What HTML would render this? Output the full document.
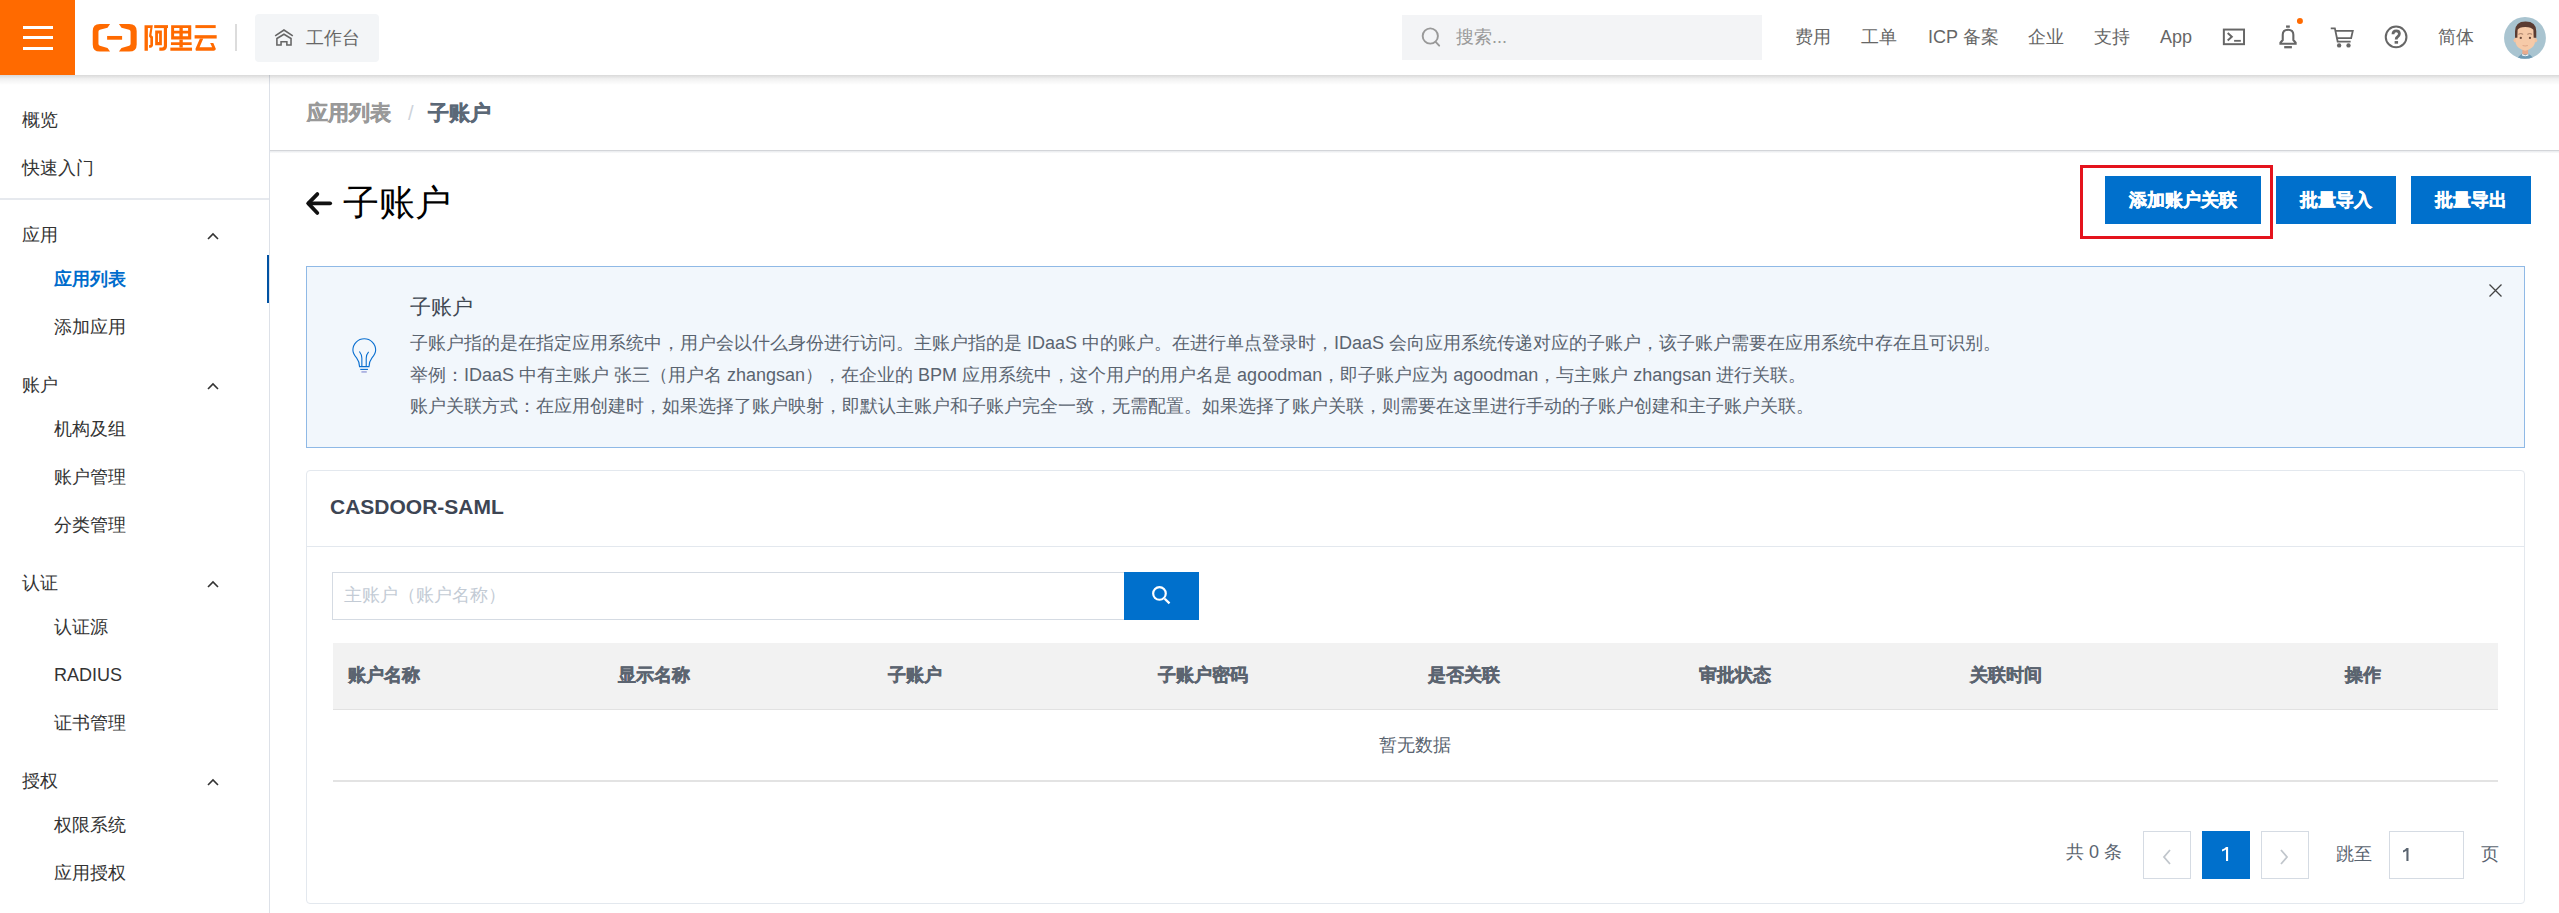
<!DOCTYPE html>
<html><head><meta charset="utf-8">
<style>
*{box-sizing:border-box;margin:0;padding:0}
html,body{width:2559px;height:913px;overflow:hidden;background:#fff;font-family:"Liberation Sans",sans-serif;color:#333}
.a{position:absolute;white-space:nowrap}
svg{position:absolute;display:block}
#hdr{position:absolute;left:0;top:0;width:2559px;height:75px;background:#fff;z-index:5}
#shd{position:absolute;left:0;top:75px;width:2559px;height:10px;background:linear-gradient(rgba(0,0,0,.15),rgba(0,0,0,.06) 38%,rgba(0,0,0,0));z-index:6}
.nav{font-size:18px;line-height:40px;top:17px;color:#666}
.sb{font-size:18px;line-height:40px;color:#333}
.btn{top:176px;height:48px;background:#0070cc;color:#fff;font-size:18px;font-weight:bold;line-height:48px;text-align:center}
.desc{font-size:18px;line-height:40px;color:#5a6470}
.th{top:655px;font-size:18px;line-height:40px;font-weight:bold;color:#5b6470}
.pg{font-size:18px;line-height:40px;color:#5a6470}
.bb{-webkit-text-stroke:0.45px currentColor}
</style></head><body>
<!-- HEADER -->
<div id="hdr">
  <div class="a" style="left:0;top:0;width:75px;height:75px;background:#ff6a00"></div>
  <div class="a" style="left:23px;top:26px;width:30px;height:3px;background:#fff"></div>
  <div class="a" style="left:23px;top:36px;width:30px;height:3px;background:#fff"></div>
  <div class="a" style="left:23px;top:47px;width:30px;height:3px;background:#fff"></div>
  <!-- logo bracket -->
  <svg style="left:88px;top:20px" width="52" height="36" viewBox="0 0 1319 913">
    <g fill="#ff6a00">
    <path d="M560 100 L300 100 Q120 100 120 280 L120 620 Q120 800 300 800 L560 800 L495 710 L300 655 Q265 640 265 600 L265 300 Q265 262 300 250 L495 195 Z"/>
    <path d="M785 100 L1045 100 Q1235 100 1235 280 L1235 620 Q1235 800 1045 800 L785 800 L850 710 L1045 655 Q1080 640 1080 600 L1080 300 Q1080 262 1045 250 L850 195 Z"/>
    <rect x="485" y="405" width="380" height="95"/>
    </g>
  </svg>
  <!-- logo text -->
  <svg style="left:140px;top:20px" width="82" height="36" viewBox="0 0 2080 913">
    <g fill="#ff6a00">
      <path d="M115 130 H325 L290 385 L330 425 L330 640 Q325 705 230 705 L230 635 L262 635 L262 460 L228 415 L262 205 H200 V780 H115 Z"/>
      <rect x="360" y="130" width="350" height="75"/>
      <path d="M605 205 H685 V660 Q685 780 560 780 H490 V695 H560 Q605 695 605 650 Z"/>
      <path d="M385 265 H555 V640 H385 Z M455 345 V560 H485 V345 Z" fill-rule="evenodd"/>
      <path d="M790 130 H1300 V495 H790 Z M865 205 V275 H1000 V205 Z M1085 205 V275 H1220 V205 Z M865 345 V415 H1000 V345 Z M1085 345 V415 H1220 V345 Z" fill-rule="evenodd"/>
      <rect x="1000" y="495" width="85" height="205"/>
      <rect x="785" y="565" width="525" height="70"/>
      <rect x="770" y="700" width="550" height="80"/>
      <rect x="1405" y="130" width="515" height="75"/>
      <rect x="1385" y="385" width="560" height="85"/>
      <path d="M1520 470 H1605 L1510 690 H1830 L1780 585 H1860 L1925 735 Q1910 780 1870 780 H1420 Q1405 770 1410 725 Z"/>
    </g>
  </svg>
  <div class="a" style="left:235px;top:24px;width:2px;height:27px;background:#dcdcdc"></div>
  <!-- workbench -->
  <div class="a" style="left:255px;top:14px;width:124px;height:48px;background:#f3f5f7;border-radius:4px"></div>
  <svg style="left:270px;top:24px" width="30" height="26" viewBox="0 0 1053 913">
    <g fill="none" stroke="#666" stroke-width="55" stroke-linejoin="miter">
      <path d="M180 420 L490 210 L800 420"/>
      <path d="M388 737 H242 V510 L490 360 L738 510 V737 H592 V625 H388 Z"/>
    </g>
  </svg>
  <div class="a nav" style="left:306px;top:18px;color:#666">工作台</div>
  <!-- search -->
  <div class="a" style="left:1402px;top:15px;width:360px;height:45px;background:#f3f4f6"></div>
  <svg style="left:1416px;top:22px" width="30" height="30" viewBox="0 0 913 913">
    <g fill="none" stroke="#999" stroke-width="58" stroke-linecap="round">
      <circle cx="435" cy="425" r="232"/>
      <path d="M605 615 L705 720"/>
    </g>
  </svg>
  <div class="a nav" style="left:1456px;color:#999">搜索...</div>
  <div class="a nav" style="left:1795px">费用</div>
  <div class="a nav" style="left:1861px">工单</div>
  <div class="a nav" style="left:1928px">ICP 备案</div>
  <div class="a nav" style="left:2028px">企业</div>
  <div class="a nav" style="left:2094px">支持</div>
  <div class="a nav" style="left:2160px">App</div>
  <svg style="left:2218px;top:22px" width="32" height="30" viewBox="0 0 974 913">
    <g fill="none" stroke="#666" stroke-width="60">
      <rect x="178" y="230" width="614" height="445"/>
      <path d="M295 335 L420 447 L295 560"/>
    </g>
    <rect x="490" y="545" width="205" height="55" fill="#666"/>
  </svg>
  <svg style="left:2274px;top:14px" width="32" height="38" viewBox="0 0 769 913">
    <circle cx="623" cy="168" r="72" fill="#ff6a00"/>
    <rect x="290" y="275" width="90" height="55" fill="#666"/>
    <path d="M155 715 L155 690 L210 625 L210 500 Q210 380 337 380 Q465 380 465 500 L465 625 L520 690 L520 715 Z" fill="none" stroke="#666" stroke-width="50"/>
    <rect x="245" y="770" width="185" height="55" fill="#666"/>
  </svg>
  <svg style="left:2326px;top:22px" width="32" height="30" viewBox="0 0 974 913">
    <g fill="none" stroke="#666" stroke-width="55">
      <path d="M145 195 H270 L355 595 H750"/>
      <path d="M295 272 H815 L765 490 H335"/>
    </g>
    <circle cx="400" cy="712" r="66" fill="#666"/>
    <circle cx="685" cy="712" r="66" fill="#666"/>
  </svg>
  <svg style="left:2380px;top:22px" width="32" height="30" viewBox="0 0 974 913">
    <circle cx="490" cy="455" r="315" fill="none" stroke="#666" stroke-width="62"/>
    <path d="M395 370 Q395 270 495 270 Q590 270 590 360 Q590 420 530 455 Q492 478 492 530" fill="none" stroke="#666" stroke-width="85"/>
    <rect x="445" y="580" width="105" height="80" fill="#666"/>
  </svg>
  <div class="a nav" style="left:2438px">简体</div>
  <svg style="left:2500px;top:14px" width="50" height="48" viewBox="0 0 951 913">
    <defs><clipPath id="avc"><circle cx="475" cy="455" r="398"/></clipPath></defs>
    <circle cx="475" cy="455" r="398" fill="#a9c4d0"/>
    <g clip-path="url(#avc)">
      <path d="M320 900 Q330 770 480 740 Q630 770 650 900 Z" fill="#6e9ab4"/>
      <rect x="425" y="640" width="110" height="130" fill="#e9aa8c"/>
      <path d="M420 760 L480 790 L540 760 L540 790 L480 805 L420 790 Z" fill="#fff"/>
      <circle cx="300" cy="500" r="42" fill="#f2c2a0"/>
      <circle cx="665" cy="500" r="42" fill="#f2c2a0"/>
      <path d="M300 330 Q300 220 480 220 Q660 220 660 330 L660 560 Q640 650 480 700 Q320 650 300 560 Z" fill="#f6caa8"/>
      <path d="M285 450 L285 330 Q290 145 485 145 Q690 145 690 330 L690 450 L640 450 L635 300 Q600 250 480 245 Q360 250 335 300 L330 450 Z" fill="#5b3c32"/>
      <circle cx="395" cy="455" r="22" fill="#6b4a3a"/>
      <circle cx="570" cy="455" r="22" fill="#6b4a3a"/>
      <path d="M350 385 Q395 360 440 385 M520 385 Q565 360 610 385" stroke="#a07860" stroke-width="18" fill="none"/>
      <path d="M430 600 Q480 615 530 600" stroke="#e0a888" stroke-width="20" fill="none"/>
    </g>
  </svg>
</div>

<div id="shd"></div>
<!-- SIDEBAR -->
<div class="a" style="left:0;top:75px;width:270px;height:838px;border-right:1px solid #dde1e8;background:#fff"></div>

<!-- SIDEBAR items -->
<div class="a sb" style="left:22px;top:100px">概览</div>
<div class="a sb" style="left:22px;top:148px">快速入门</div>
<div class="a" style="left:0;top:198px;width:269px;height:2px;background:#e6e9ee"></div>
<div class="a sb" style="left:22px;top:215.0px">应用</div>
<svg style="left:207px;top:232.0px" width="12" height="8" viewBox="0 0 12 8"><path d="M1 7 L6 2 L11 7" fill="none" stroke="#333" stroke-width="1.6"/></svg>
<div class="a sb" style="left:54px;top:259.0px;color:#006ccc;font-weight:bold">应用列表</div>
<div class="a" style="left:267px;top:255px;width:2px;height:48px;background:#0052a3"></div>
<div class="a sb" style="left:54px;top:307.0px">添加应用</div>
<div class="a sb" style="left:22px;top:364.7px">账户</div>
<svg style="left:207px;top:381.7px" width="12" height="8" viewBox="0 0 12 8"><path d="M1 7 L6 2 L11 7" fill="none" stroke="#333" stroke-width="1.6"/></svg>
<div class="a sb" style="left:54px;top:408.7px">机构及组</div>
<div class="a sb" style="left:54px;top:456.7px">账户管理</div>
<div class="a sb" style="left:54px;top:504.7px">分类管理</div>
<div class="a sb" style="left:22px;top:562.8px">认证</div>
<svg style="left:207px;top:579.8px" width="12" height="8" viewBox="0 0 12 8"><path d="M1 7 L6 2 L11 7" fill="none" stroke="#333" stroke-width="1.6"/></svg>
<div class="a sb" style="left:54px;top:606.8px">认证源</div>
<div class="a sb" style="left:54px;top:654.8px">RADIUS</div>
<div class="a sb" style="left:54px;top:702.8px">证书管理</div>
<div class="a sb" style="left:22px;top:760.8px">授权</div>
<svg style="left:207px;top:777.8px" width="12" height="8" viewBox="0 0 12 8"><path d="M1 7 L6 2 L11 7" fill="none" stroke="#333" stroke-width="1.6"/></svg>
<div class="a sb" style="left:54px;top:804.8px">权限系统</div>
<div class="a sb" style="left:54px;top:852.8px">应用授权</div>

<!-- CONTENT -->
<div class="a" style="left:270px;top:150px;width:2289px;height:1px;background:#d3d5d9"></div>
<div class="a" style="left:270px;top:151px;width:2289px;height:2px;background:linear-gradient(#e8eaed,#fafbfb)"></div>
<div class="a bb" style="left:307px;top:93px;font-size:21px;line-height:40px;font-weight:bold;color:#999">应用列表</div>
<div class="a" style="left:408px;top:93px;font-size:20px;line-height:40px;color:#cdd3db">/</div>
<div class="a bb" style="left:428px;top:93px;font-size:21px;line-height:40px;font-weight:bold;color:#5b6877">子账户</div>
<svg style="left:300px;top:186px" width="38" height="36" viewBox="0 0 964 913">
  <g fill="none" stroke="#111" stroke-width="95" stroke-linecap="round" stroke-linejoin="round">
    <path d="M440 205 L210 440 L440 685"/><path d="M215 440 H765"/>
  </g>
</svg>
<div class="a" style="left:343px;top:183px;font-size:36px;line-height:40px;color:#000">子账户</div>
<!-- buttons -->
<div class="a" style="left:2080px;top:165px;width:193px;height:74px;border:3px solid #e4131d"></div>
<div class="a btn bb" style="left:2105px;width:156px">添加账户关联</div>
<div class="a btn bb" style="left:2276px;width:120px">批量导入</div>
<div class="a btn bb" style="left:2411px;width:120px">批量导出</div>
<!-- alert -->
<div class="a" style="left:306px;top:266px;width:2219px;height:182px;border:1px solid #8fb9e6;background:#f2f7fc"></div>
<svg style="left:346px;top:334px" width="36" height="42" viewBox="0 0 783 913">
  <g fill="none" stroke="#0a6fd0" stroke-width="24" stroke-linecap="butt">
    <path d="M295 710 Q292 600 230 520 Q150 430 150 350 A247 247 0 0 1 645 350 Q645 430 565 520 Q502 600 500 710 Z"/>
    <path d="M292 380 Q345 450 345 525 V710 M492 390 Q440 450 440 525 V710"/>
    <path d="M310 770 H478"/>
  </g>
  <path d="M335 825 H452" stroke="#7f86d0" stroke-width="24"/>
</svg>
<div class="a" style="left:410px;top:287px;font-size:21px;line-height:40px;color:#404853">子账户</div>
<div class="a desc" style="left:410px;top:323px">子账户指的是在指定应用系统中，用户会以什么身份进行访问。主账户指的是 IDaaS 中的账户。在进行单点登录时，IDaaS 会向应用系统传递对应的子账户，该子账户需要在应用系统中存在且可识别。</div>
<div class="a desc" style="left:410px;top:355px">举例：IDaaS 中有主账户 张三（用户名 zhangsan），在企业的 BPM 应用系统中，这个用户的用户名是 agoodman，即子账户应为 agoodman，与主账户 zhangsan 进行关联。</div>
<div class="a desc" style="left:410px;top:386px">账户关联方式：在应用创建时，如果选择了账户映射，即默认主账户和子账户完全一致，无需配置。如果选择了账户关联，则需要在这里进行手动的子账户创建和主子账户关联。</div>
<svg style="left:2489px;top:284px" width="13" height="13" viewBox="0 0 13 13">
  <path d="M0.5 0.5 L12.5 12.5 M12.5 0.5 L0.5 12.5" stroke="#444" stroke-width="1.3"/>
</svg>
<!-- card -->
<div class="a" style="left:306px;top:470px;width:2219px;height:434px;border:1px solid #e3e8ee;border-radius:4px;background:#fff"></div>
<div class="a" style="left:330px;top:487px;font-size:21px;line-height:40px;font-weight:bold;color:#3d4553">CASDOOR-SAML</div>
<div class="a" style="left:307px;top:546px;width:2217px;height:1px;background:#e3e8ee"></div>
<div class="a" style="left:332px;top:572px;width:793px;height:48px;border:1px solid #d5dbe3;background:#fff"></div>
<div class="a" style="left:344px;top:575px;font-size:18px;line-height:40px;color:#c3cbd5">主账户（账户名称）</div>
<div class="a" style="left:1124px;top:572px;width:75px;height:48px;background:#0070cc"></div>
<svg style="left:1146px;top:580px" width="30" height="30" viewBox="0 0 913 913">
  <circle cx="410" cy="410" r="192" fill="none" stroke="#fff" stroke-width="66"/>
  <path d="M570 570 L715 712" stroke="#fff" stroke-width="72"/>
</svg>
<!-- table -->
<div class="a" style="left:333px;top:643px;width:2165px;height:66px;background:#f2f2f2"></div>
<div class="a" style="left:333px;top:709px;width:2165px;height:1px;background:#e2e2e2"></div>
<div class="a" style="left:333px;top:780px;width:2165px;height:2px;background:#e3e3e3"></div>
<div class="a th bb" style="left:348px">账户名称</div>
<div class="a th bb" style="left:618px">显示名称</div>
<div class="a th bb" style="left:888px">子账户</div>
<div class="a th bb" style="left:1158px">子账户密码</div>
<div class="a th bb" style="left:1428px">是否关联</div>
<div class="a th bb" style="left:1699px">审批状态</div>
<div class="a th bb" style="left:1970px">关联时间</div>
<div class="a th bb" style="left:2345px">操作</div>
<div class="a" style="left:1379px;top:725px;font-size:18px;line-height:40px;color:#5a6470">暂无数据</div>
<!-- pagination -->
<div class="a pg" style="left:2066px;top:832px">共 0 条</div>
<div class="a" style="left:2143px;top:831px;width:48px;height:48px;border:1px solid #d5dbe3;background:#fff"></div>
<svg style="left:2160px;top:848px" width="14" height="18" viewBox="0 0 14 18"><path d="M10 2 L4 9 L10 16" fill="none" stroke="#c1c6cc" stroke-width="1.8"/></svg>
<div class="a" style="left:2202px;top:831px;width:48px;height:48px;background:#0070cc"></div>
<svg style="left:2216px;top:842px" width="20" height="24" viewBox="0 0 20 24"><path d="M10 5 H12.1 V19 H10 V7.6 Q8.5 8.8 6 9.6 V7.6 Q8.6 6.6 10 5 Z" fill="#fff"/></svg>
<div class="a" style="left:2261px;top:831px;width:48px;height:48px;border:1px solid #d5dbe3;background:#fff"></div>
<svg style="left:2277px;top:848px" width="14" height="18" viewBox="0 0 14 18"><path d="M4 2 L10 9 L4 16" fill="none" stroke="#c1c6cc" stroke-width="1.8"/></svg>
<div class="a pg" style="left:2336px;top:834px">跳至</div>
<div class="a" style="left:2389px;top:831px;width:75px;height:48px;border:1px solid #d5dbe3;background:#fff"></div>
<svg style="left:2398px;top:842px" width="20" height="24" viewBox="0 0 20 24"><path d="M8.4 6 H10.5 V19 H8.4 V8.8 Q6.9 10 5 10.5 V8.6 Q7.3 7.6 8.4 6 Z" fill="#5a6470"/></svg>
<div class="a pg" style="left:2481px;top:834px">页</div>
</body></html>
